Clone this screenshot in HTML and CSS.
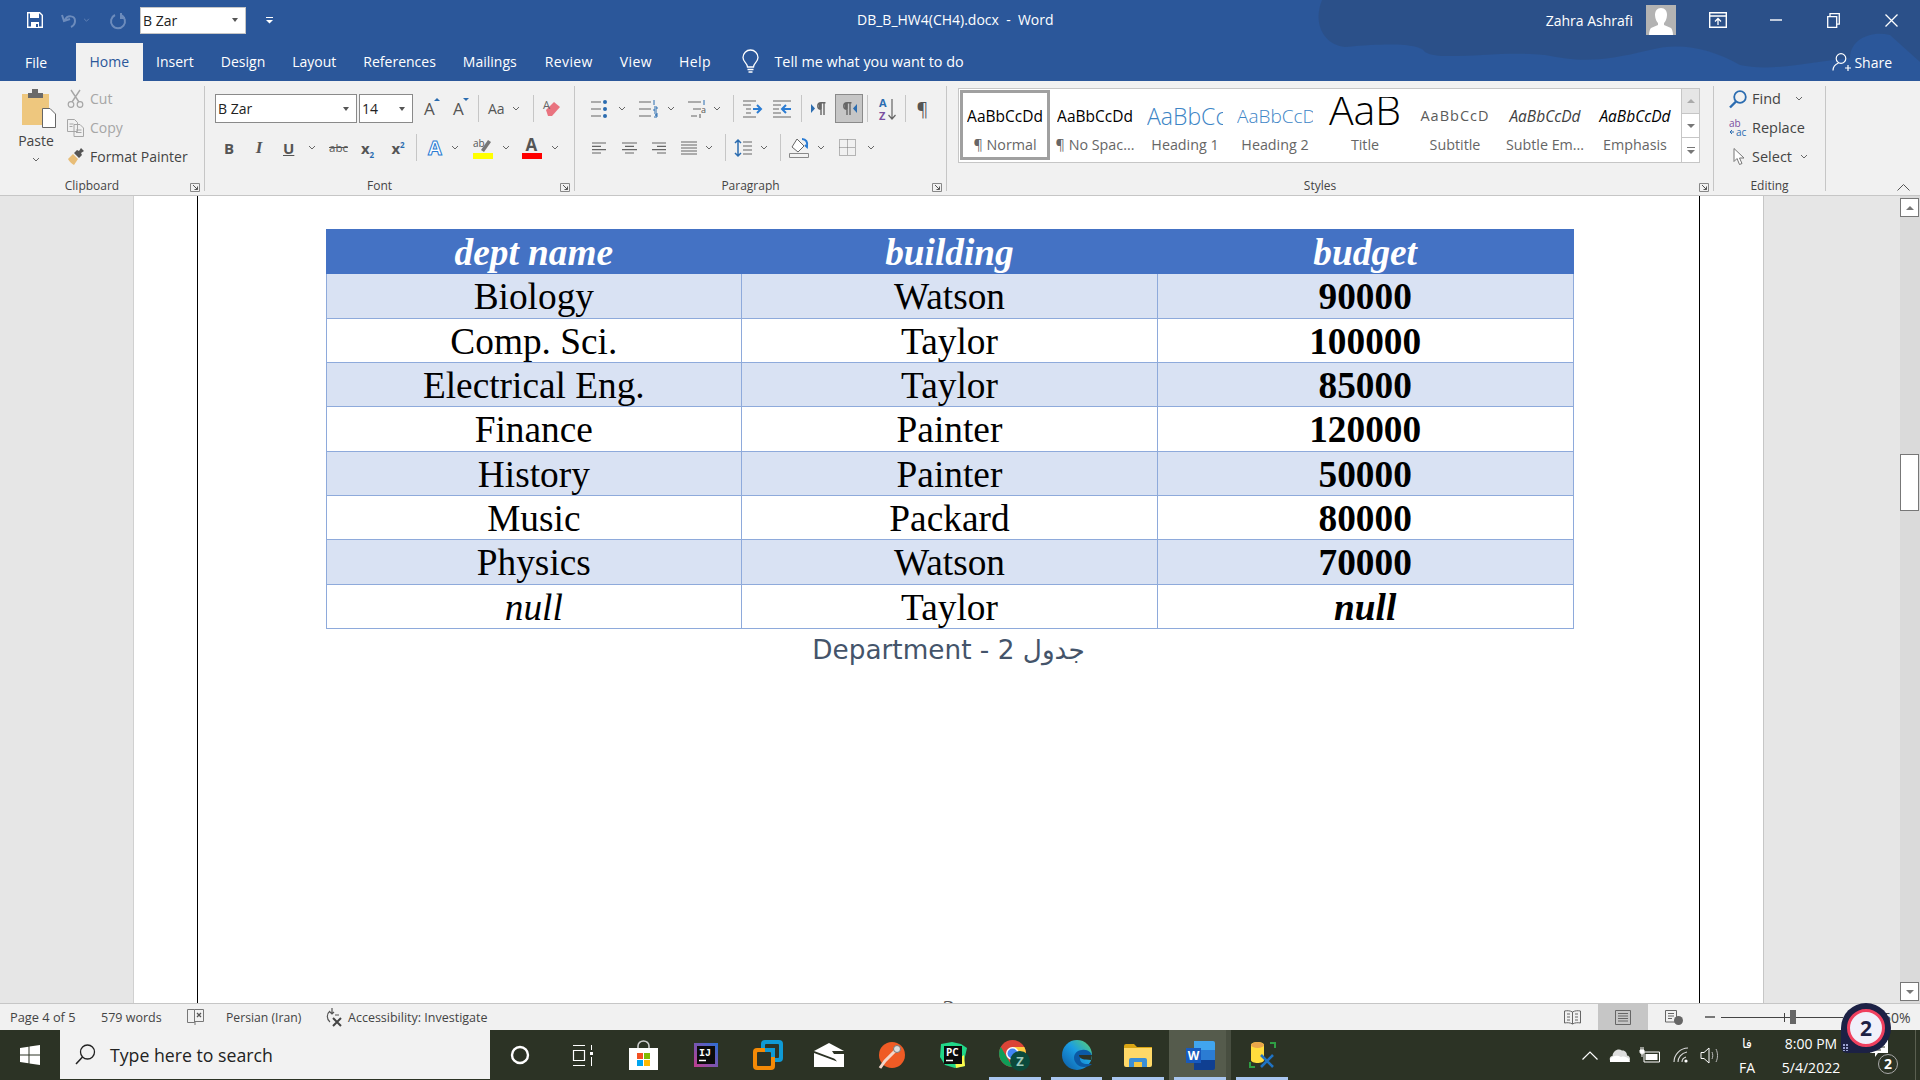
FILE: index.html
```html
<!DOCTYPE html>
<html>
<head>
<meta http-equiv="Content-Type" content="text/html; charset=utf-8"/>
<title>DB_B_HW4(CH4).docx - Word</title>
<link rel="stylesheet" href="styles.css">
</head>
<body>

<svg class="defs" width="0" height="0">
  <symbol id="chev" viewBox="0 0 8 5"><path d="M1 1l3 3 3-3" fill="none" stroke="#666" stroke-width="1"/></symbol>
  <symbol id="launch" viewBox="0 0 10 9"><path d="M.5 8.500V.5h9v8z" fill="none" stroke="#888"/><path d="M3 2l4.500 4.500M7.500 3.500v3h-3" fill="none" stroke="#555"/></symbol>
  <symbol id="lines-l" viewBox="0 0 14 12"><path d="M0 1h14M0 4.300h9M0 7.600h14M0 11h9" stroke="#666" stroke-width="1.200"/></symbol>
  <symbol id="lines-c" viewBox="0 0 15 12"><path d="M0 1h15M3 4.300h9M0 7.600h15M3 11h9" stroke="#666" stroke-width="1.200"/></symbol>
  <symbol id="lines-r" viewBox="0 0 14 12"><path d="M0 1h14M5 4.300h9M0 7.600h14M5 11h9" stroke="#666" stroke-width="1.200"/></symbol>
  <symbol id="lines-j" viewBox="0 0 16 14"><path d="M0 1h16M0 4h16M0 7h16M0 10h16M0 13h16" stroke="#666" stroke-width="1.200"/></symbol>
</svg>

<header class="titlebar">
  <svg class="titlebar-art" width="600" height="81" viewBox="1320 0 600 81"><path d="M1322 0C1312 25 1325 45 1345 47 1400 42 1420 45 1425 52 1440 62 1500 50 1545 55 1580 62 1600 62 1650 50 1680 42 1710 48 1740 65 1770 72 1810 62 1850 58 1850 40 1870 30 1890 35L1920 62V0z" fill="#2c4f85" opacity=".8"/></svg>
  <div class="title-row">
    <svg class="ml-27" width="16" height="16" viewBox="0 0 16 16"><path d="M.7.7h12l2.600 2.600v12H.7z" fill="none" stroke="#fff" stroke-width="1.400"/><path d="M3 1h9v5H3zM4 10h8v6H4z" fill="#fff"/><path d="M9 12h2v3H9z" fill="#2b579a"/></svg>
    <svg class="ml-18" width="19" height="16" viewBox="0 0 19 16"><path d="M4 8c2-5 10-5 10 1 0 3-2 5-4 6M1 3l2 6 6-2" fill="none" stroke="#6d8cbc" stroke-width="2"/></svg>
    <svg class="ml-3" width="7" height="4" viewBox="0 0 8 5"><path d="M1 1l3 3 3-3" fill="none" stroke="#6d8cbc"/></svg>
    <svg class="ml-20" width="16" height="17" viewBox="0 0 16 17"><path d="M5 3a7 7 0 1 0 6 0M11 1v5h4" fill="none" stroke="#6d8cbc" stroke-width="2"/></svg>
    <div class="combo qat-combo ml-14"><span>B Zar</span><i class="drop"></i></div>
    <svg class="ml-20" width="7" height="8" viewBox="0 0 7 8"><path d="M0 1.500h7" stroke="#fff"/><path d="M0 4h7L3.500 7.500z" fill="#fff"/></svg>
    <div class="doc-title">DB_B_HW4(CH4).docx&nbsp; - &nbsp;Word</div>
    <div class="user-controls">
      <span class="user-name">Zahra Ashrafi</span>
      <svg class="avatar" width="30" height="30" viewBox="0 0 30 30"><path fill="#b3b3b3" d="M0 0h30v30H0z"/><path fill="#fff" d="M15 3c4 0 6 3 6 7s-2 7-3 8v2l7 3c1 1 2 4 2 7H3c0-3 1-6 2-7l7-3v-2c-1-1-3-4-3-8s2-7 6-7z"/></svg>
      <svg class="ml-33" width="18" height="16" viewBox="0 0 18 16"><path d="M.7.7h16.600v14.600H.7zM1 4h16" fill="none" stroke="#fff" stroke-width="1.400"/><path d="M9 13V7M6 9.500L9 6.500l3 3" fill="none" stroke="#fff" stroke-width="1.300"/></svg>
      <svg class="ml-43" width="12" height="2" viewBox="0 0 12 2"><path d="M0 1h12" stroke="#fff" stroke-width="1.400"/></svg>
      <svg class="ml-45" width="13" height="15" viewBox="0 0 13 15"><path d="M.7 3.700h9v10.600h-9zM3 3.500V.7h9.300v10.500h-2.500" fill="none" stroke="#fff" stroke-width="1.300"/></svg>
      <svg class="ml-45" width="13" height="13" viewBox="0 0 13 13"><path d="M.5.500l12 12M12.500.5l-12 12" stroke="#fff" stroke-width="1.300"/></svg>
    </div>
  </div>
  <nav class="tab-row">
    <a class="tab-file">File</a>
    <a class="tab active">Home</a>
    <a class="tab">Insert</a>
    <a class="tab">Design</a>
    <a class="tab">Layout</a>
    <a class="tab">References</a>
    <a class="tab tab-mail">Mailings</a>
    <a class="tab tab-wide">Review</a>
    <a class="tab tab-wide">View</a>
    <a class="tab tab-wide">Help</a>
    <svg class="ml-18" width="17" height="24" viewBox="0 0 17 24"><path d="M5.500 17c0-4-4.500-5-4.500-9.500a7.500 7.500 0 0 1 15 0C16 12 11.500 13 11.500 17z" fill="none" stroke="#fff" stroke-width="1.300"/><path d="M5.500 19.500h6M6.500 22h4" stroke="#fff" stroke-width="1.500"/></svg>
    <span class="tell-me">Tell me what you want to do</span>
    <div class="share">
      <svg width="19" height="18" viewBox="0 0 19 18"><circle cx="9" cy="5.500" r="4.800" fill="none" stroke="#fff" stroke-width="1.200"/><path d="M1 17.500c0-4 3-6.500 5.500-7.500M13 15h6M16 12v6" fill="none" stroke="#fff" stroke-width="1.200"/></svg>
      <span>Share</span>
    </div>
  </nav>
</header>

<section class="ribbon">
  <div class="group clipboard">
    <div class="group-body clip-body">
      <div class="paste">
        <svg width="34" height="39" viewBox="0 0 34 39"><path d="M0 5h27v31H0z" fill="#eec77e"/><path d="M6 4h4V0h6v4h5v5H6z" fill="#6a6a6a"/><path d="M20.500 19.500h7.500l5.500 5.500v13.500h-13z" fill="#fff" stroke="#666"/></svg>
        <span>Paste</span>
        <svg class="chev" width="8" height="5"><use href="#chev"/></svg>
      </div>
      <div class="small-col">
        <div class="small-btn off"><svg width="17" height="18" viewBox="0 0 17 18"><circle cx="4" cy="14.500" r="2.800" fill="none" stroke="#a6a6a6" stroke-width="1.200"/><circle cx="13" cy="14.500" r="2.800" fill="none" stroke="#a6a6a6" stroke-width="1.200"/><path d="M5 12L13 0M12 12L4 0" stroke="#a6a6a6" stroke-width="1.400"/></svg><span>Cut</span></div>
        <div class="small-btn off"><svg width="17" height="18" viewBox="0 0 17 18"><path d="M.5.500h7l3 3v9H.5zM7 5.500h6l3.500 3.500v8.500H7z" fill="#f1f1f1" stroke="#a6a6a6"/><path d="M2.500 5h4M2.500 7.500h3M9 11h5.500M9 13.500h5.500" stroke="#a6a6a6"/></svg><span>Copy</span></div>
        <div class="small-btn"><svg width="17" height="18" viewBox="0 0 17 18"><path d="M1 11l5-5 5 5-4 6c-2-1-5-4-6-6z" fill="#e8bd77"/><path d="M7 5l3-3 2 1 2-3 3 3-3 2 1 2-3 3z" fill="#555"/></svg><span>Format Painter</span></div>
      </div>
    </div>
    <div class="group-label">Clipboard<svg class="launcher" width="10" height="9"><use href="#launch"/></svg></div>
  </div>

  <div class="group font">
    <div class="group-body pad-rows">
      <div class="row">
        <div class="combo font-name"><span>B Zar</span><i class="drop"></i></div>
        <div class="combo font-size ml-2"><span>14</span><i class="drop"></i></div>
        <span class="glyph grow ml-11">A<i class="tick up"></i></span>
        <span class="glyph grow ml-15">A<i class="tick down"></i></span>
        <i class="sep ml-11"></i>
        <span class="glyph case ml-9">Aa</span>
        <svg class="chev ml-6" width="8" height="5"><use href="#chev"/></svg>
        <i class="sep ml-13"></i>
        <svg class="ml-9" width="18" height="19" viewBox="0 0 18 19"><path d="M3 11L11 3l6 5-8 9H5z" fill="#e9737f"/><text x="0" y="10" font-size="11" font-family="Open Sans" fill="#666">A</text></svg>
      </div>
      <div class="row second">
        <b class="fmt w-9 ml-9">B</b>
        <i class="fmt w-8 ital ml-22">I</i>
        <b class="fmt w-11 under ml-20">U</b>
        <svg class="chev ml-14" width="8" height="5"><use href="#chev"/></svg>
        <span class="fmt w-19 strike ml-13">abc</span>
        <span class="fmt w-15 bold ml-12">x<sub>2</sub></span>
        <span class="fmt w-14 bold ml-16">x<sup>2</sup></span>
        <i class="sep ml-11"></i>
        <span class="fmt w-16 effect ml-10">A</span>
        <svg class="chev ml-8" width="8" height="5"><use href="#chev"/></svg>
        <svg class="ml-14" width="20" height="22" viewBox="0 0 20 22"><text x="0" y="10" font-size="10" font-family="Open Sans" fill="#555">ab</text><path d="M8 13l7-10 3 2-7 10z" fill="#777"/><path d="M0 16h20v6H0z" fill="#ffff00"/></svg>
        <svg class="chev ml-9" width="8" height="5"><use href="#chev"/></svg>
        <svg class="ml-12" width="20" height="22" viewBox="0 0 20 22"><text x="3.500" y="14" font-size="17" font-weight="700" font-family="Open Sans" fill="#555">A</text><path d="M0 16h20v6H0z" fill="#ff0000"/></svg>
        <svg class="chev ml-9" width="8" height="5"><use href="#chev"/></svg>
      </div>
    </div>
    <div class="group-label">Font<svg class="launcher" width="10" height="9"><use href="#launch"/></svg></div>
  </div>

  <div class="group para">
    <div class="group-body pad-rows">
      <div class="row">
        <svg class="ml-16" width="16" height="18" viewBox="0 0 16 18"><path d="M0 2h10M0 9h10M0 16h10" stroke="#666" stroke-width="1.200"/><circle cx="14" cy="2" r="2" fill="#2b6cb0"/><circle cx="14" cy="9" r="2" fill="#2b6cb0"/><circle cx="14" cy="16" r="2" fill="#2b6cb0"/></svg>
        <svg class="chev ml-11" width="8" height="5"><use href="#chev"/></svg>
        <svg class="ml-13" width="19" height="18" viewBox="0 0 19 18"><path d="M0 2h12M0 9h12M0 16h12" stroke="#666" stroke-width="1.200"/><path d="M15 0v5M15 7h3v2h-3v2h3M15 13h3v2h-2 2v2h-3" fill="none" stroke="#2b6cb0"/></svg>
        <svg class="chev ml-9" width="8" height="5"><use href="#chev"/></svg>
        <svg class="ml-13" width="19" height="18" viewBox="0 0 19 18"><path d="M0 2h13M5 9h8M3 16h6" stroke="#666" stroke-width="1.200"/><path d="M16 0v5" stroke="#2b6cb0"/><text x="13" y="13" font-size="9" font-family="Open Sans" fill="#555">a</text><path d="M12 14v4" stroke="#555"/></svg>
        <svg class="chev ml-6" width="8" height="5"><use href="#chev"/></svg>
        <i class="sep ml-12"></i>
        <svg class="ml-9" width="19" height="18" viewBox="0 0 19 18"><path d="M0 1h13M0 5h8M3 9h5M3 13h5M0 17h13" stroke="#666" stroke-width="1.100"/><path d="M10 9h8M14 5l4 4-4 4" fill="none" stroke="#2b7cd3" stroke-width="2"/></svg>
        <svg class="ml-11" width="18" height="18" viewBox="0 0 18 18"><path d="M0 1h18M0 5h8M0 9h6M0 13h8M0 17h18" stroke="#666" stroke-width="1.100"/><path d="M18 9h-9M13 5L9 9l4 4" fill="none" stroke="#2b7cd3" stroke-width="2"/></svg>
        <i class="sep ml-10"></i>
        <svg class="ml-9" width="15" height="13" viewBox="0 0 15 13"><path d="M0 2l4 4.500L0 11z" fill="#2b6cb0"/><path d="M10 1v12M13 1v12M14.500 .8H10a3 3 0 0 0 0 6.500" fill="none" stroke="#666" stroke-width="1.400"/><path d="M7.500 1h3v6h-3z" fill="#666"/></svg>
        <div class="toggled ml-9"><svg width="15" height="13" viewBox="0 0 15 13"><path d="M15 2l-4 4.500 4 4.500z" fill="#2b6cb0"/><path d="M5 1v12M8 1v12M9.500 .8H5a3 3 0 0 0 0 6.500" fill="none" stroke="#666" stroke-width="1.400"/><path d="M2.500 1h3v6h-3z" fill="#666"/></svg></div>
        <i class="sep ml-4"></i>
        <svg class="ml-11" width="17" height="24" viewBox="0 0 17 24"><text x="0" y="10" font-size="11" font-weight="700" font-family="Open Sans" fill="#2b6cb0">A</text><text x="0" y="23" font-size="11" font-weight="700" font-family="Open Sans" fill="#7a4ea0">Z</text><path d="M13 2v20M9.500 18l3.500 4 3.500-4" fill="none" stroke="#666" stroke-width="1.200"/></svg>
        <i class="sep ml-9"></i>
        <span class="fmt w-13 pilcrow ml-10">¶</span>
      </div>
      <div class="row second">
        <svg class="ml-17" width="14" height="12"><use href="#lines-l"/></svg>
        <svg class="ml-16" width="15" height="12"><use href="#lines-c"/></svg>
        <svg class="ml-15" width="14" height="12"><use href="#lines-r"/></svg>
        <svg class="ml-15" width="16" height="14"><use href="#lines-j"/></svg>
        <svg class="chev ml-8" width="8" height="5"><use href="#chev"/></svg>
        <i class="sep ml-12"></i>
        <svg class="ml-9" width="17" height="18" viewBox="0 0 17 18"><path d="M3 1v16M0 4l3-3 3 3M0 14l3 3 3-3" fill="none" stroke="#2b6cb0" stroke-width="1.500"/><path d="M8 3h9M8 7h9M8 11h9M8 15h9" stroke="#666" stroke-width="1.200"/></svg>
        <svg class="chev ml-8" width="8" height="5"><use href="#chev"/></svg>
        <i class="sep ml-12"></i>
        <svg class="ml-8" width="20" height="20" viewBox="0 0 20 20"><path d="M8 1l7 7-6 6-6-5z" fill="#fff" stroke="#666"/><path d="M13 1c4 0 6 3 5 8l-2-2" fill="none" stroke="#2b7cd3" stroke-width="2"/><path d="M.5 15.500h19v4H.5z" fill="#f1f1f1" stroke="#888"/></svg>
        <svg class="chev ml-8" width="8" height="5"><use href="#chev"/></svg>
        <svg class="ml-14" width="17" height="17" viewBox="0 0 17 17"><path d="M.5.500h16v16H.5zM8.500.5v16M.5 8.500h16" fill="none" stroke="#777" stroke-dasharray="1 1"/></svg>
        <svg class="chev ml-11" width="8" height="5"><use href="#chev"/></svg>
      </div>
    </div>
    <div class="group-label">Paragraph<svg class="launcher" width="10" height="9"><use href="#launch"/></svg></div>
  </div>

  <div class="group styles">
    <div class="group-body">
      <div class="gallery">
        <div class="gallery-items">
          <div class="style-item selected"><div class="sample s-normal">AaBbCcDd</div><div class="style-name">¶ Normal</div></div>
          <div class="style-item"><div class="sample s-normal">AaBbCcDd</div><div class="style-name">¶ No Spac...</div></div>
          <div class="style-item"><div class="sample s-h1">AaBbCc</div><div class="style-name">Heading 1</div></div>
          <div class="style-item"><div class="sample s-h2">AaBbCcD</div><div class="style-name">Heading 2</div></div>
          <div class="style-item"><div class="sample s-title">AaB</div><div class="style-name">Title</div></div>
          <div class="style-item"><div class="sample s-sub">AaBbCcD</div><div class="style-name">Subtitle</div></div>
          <div class="style-item"><div class="sample s-subem">AaBbCcDd</div><div class="style-name">Subtle Em...</div></div>
          <div class="style-item"><div class="sample s-em">AaBbCcDd</div><div class="style-name">Emphasis</div></div>
        </div>
        <div class="gallery-scroll">
          <div class="g-btn first"><i class="tri up-tri"></i></div>
          <div class="g-btn"><i class="tri"></i></div>
          <div class="g-btn"><i class="bar"></i><i class="tri"></i></div>
        </div>
      </div>
    </div>
    <div class="group-label">Styles<svg class="launcher" width="10" height="9"><use href="#launch"/></svg></div>
  </div>

  <div class="group editing">
    <div class="group-body">
      <div class="small-col edit-col">
        <div class="small-btn"><svg width="18" height="18" viewBox="0 0 18 18"><circle cx="11" cy="7" r="5.800" fill="none" stroke="#2b6cb0" stroke-width="1.800"/><path d="M7 11.500L1 17.500" stroke="#2b6cb0" stroke-width="2.400"/></svg><span>Find</span><svg class="chev ml-9" width="8" height="5"><use href="#chev"/></svg></div>
        <div class="small-btn"><svg width="18" height="18" viewBox="0 0 18 18"><text x="0" y="8" font-size="10" font-family="Open Sans" fill="#7a4ea0">ab</text><text x="7" y="17" font-size="10" font-family="Open Sans" fill="#2b6cb0">ac</text><path d="M1 13h4M3 11l-2 2 2 2" fill="none" stroke="#2b6cb0"/></svg><span>Replace</span></div>
        <div class="small-btn"><svg width="18" height="18" viewBox="0 0 18 18"><path d="M5 .5v13l3-3 2.500 6 2.500-1-2.500-5.500h4.500z" fill="#fff" stroke="#777"/></svg><span>Select</span><svg class="chev ml-3" width="8" height="5"><use href="#chev"/></svg></div>
      </div>
    </div>
    <div class="group-label edit-label">Editing</div>
  </div>
  <svg class="collapse" width="13" height="7" viewBox="0 0 13 7"><path d="M.5 6.500l6-6 6 6" fill="none" stroke="#555"/></svg>
</section>

<main class="doc">
  <div class="gutter-left"></div>
  <div class="page">
    <div class="page-body">
      <table class="dept">
        <tr class="head"><th>dept name</th><th>building</th><th>budget</th></tr>
        <tr class="band"><td>Biology</td><td>Watson</td><td class="num">90000</td></tr>
        <tr><td>Comp. Sci.</td><td>Taylor</td><td class="num">100000</td></tr>
        <tr class="band"><td>Electrical Eng.</td><td>Taylor</td><td class="num">85000</td></tr>
        <tr><td>Finance</td><td>Painter</td><td class="num">120000</td></tr>
        <tr class="band"><td>History</td><td>Painter</td><td class="num">50000</td></tr>
        <tr><td>Music</td><td>Packard</td><td class="num">80000</td></tr>
        <tr class="band"><td>Physics</td><td>Watson</td><td class="num">70000</td></tr>
        <tr><td class="null">null</td><td>Taylor</td><td class="num null">null</td></tr>
      </table>
      <p class="caption" dir="rtl">جدول 2 - Department</p>
      <div class="page-num">3</div>
    </div>
  </div>
  <div class="gutter-right"></div>
  <div class="vscroll">
    <div class="v-btn"><i class="tri up-tri"></i></div>
    <div class="v-thumb"></div>
    <div class="v-btn"><i class="tri"></i></div>
  </div>
</main>

<footer class="status">
  <span class="st-page">Page 4 of 5</span>
  <span class="st-words">579 words</span>
  <svg class="st-book" width="17" height="16" viewBox="0 0 17 16"><path d="M7.500.5H.5v13h7zM7.500.5h9v12h-9" fill="none" stroke="#777"/><path d="M10 4l4 4M14 4l-4 4" stroke="#555" stroke-width="1.300"/><path d="M8 16v-3" stroke="#777"/></svg>
  <span class="st-lang">Persian (Iran)</span>
  <svg class="st-a11y" width="20" height="19" viewBox="0 0 20 19"><path d="M6 3a7 7 0 0 0 0 11M8 0v6M6 4l2 2 2-2M11 7h4" fill="none" stroke="#555" stroke-width="1.200"/><path d="M9 10l8 8M17 10l-8 8" stroke="#444" stroke-width="2"/></svg>
  <span class="st-acc">Accessibility: Investigate</span>
  <div class="st-right">
    <svg width="17" height="15" viewBox="0 0 17 15"><path d="M8.500 2C6 .5 3 .5.500 1v12c2.500-.5 5.500-.5 8 1 2.500-1.500 5.500-1.500 8-1V1c-2.500-.5-5.500-.5-8 1zM8.500 2v12M3 4h3M3 7h3M3 10h3M11 4h3M11 7h3M11 10h3" fill="none" stroke="#666"/></svg>
    <div class="view-active"><svg width="16" height="15" viewBox="0 0 16 15"><path d="M.5.500h15v14H.5zM3 3.500h10M3 6h10M3 8.500h10M3 11h10" fill="none" stroke="#666"/></svg></div>
    <svg width="18" height="15" viewBox="0 0 18 15"><path d="M11 12H.5V.5h11v7M3 3.500h6M3 6h6M3 8.500h4" fill="none" stroke="#666"/><circle cx="13.500" cy="10.500" r="4.500" fill="#666"/></svg>
    <svg class="ml-22" width="10" height="2" viewBox="0 0 10 2"><path d="M0 1h10" stroke="#444" stroke-width="1.400"/></svg>
    <div class="zoom-track"><i class="zoom-tick"></i><i class="zoom-thumb"></i></div>
    <span class="zoom-pct">50%</span>
  </div>
</footer>

<div class="taskbar">
  <div class="start"><svg width="20" height="20" viewBox="0 0 20 20"><path d="M0 3l8.500-1.300V9.500H0zM9.500 1.500L20 0v9.500H9.500zM0 10.500h8.500v7.800L0 17zM9.500 10.500H20V20L9.500 18.500z" fill="#fff"/></svg></div>
  <div class="search">
    <svg width="21" height="21" viewBox="0 0 21 21"><circle cx="12.500" cy="8" r="7" fill="none" stroke="#222" stroke-width="1.300"/><path d="M7.500 13L1 20" stroke="#222" stroke-width="1.500"/></svg>
    <span>Type here to search</span>
  </div>
  <div class="app"><svg width="20" height="20" viewBox="0 0 20 20"><circle cx="10" cy="10" r="8" fill="none" stroke="#fff" stroke-width="2.400"/></svg></div>
  <div class="app"><svg width="21" height="21" viewBox="0 0 21 21"><path d="M1 .5h12M1 20.500h12M1.500 5.500h11v10h-11z" fill="none" stroke="#fff" stroke-width="1.200"/><path d="M18 7h3v3h-3z" fill="#fff"/><path d="M19.500 0v5M19.500 12v9" stroke="#fff"/></svg></div>
  <div class="app"><svg width="29" height="29" viewBox="0 0 29 29"><path d="M9 8V5a5.500 5 0 0 1 11 0v3" fill="none" stroke="#ccc" stroke-width="1.600"/><path d="M0 7h29v22H0z" fill="#fff"/><path d="M8 12h6v6H8z" fill="#f25022"/><path d="M15 12h6v6h-6z" fill="#7fba00"/><path d="M8 19h6v6H8z" fill="#00a4ef"/><path d="M15 19h6v6h-6z" fill="#ffb900"/></svg></div>
  <div class="app"><svg width="24" height="24" viewBox="0 0 24 24"><defs><linearGradient id="ij" x1="0" y1="1" x2="1" y2="0"><stop offset="0" stop-color="#c43c8c"/><stop offset="1" stop-color="#2a6fd6"/></linearGradient></defs><path d="M0 0h24v24H0z" fill="url(#ij)"/><path d="M3 3h18v18H3z" fill="#0b0b0b"/><text x="5" y="13" font-size="10" font-weight="700" font-family="Liberation Mono" fill="#fff">IJ</text><path d="M5 17.500h7" stroke="#fff" stroke-width="1.500"/></svg></div>
  <div class="app"><svg width="30" height="30" viewBox="0 0 30 30"><rect x="8" y="0" width="22" height="22" rx="4" fill="#0f9ad6"/><rect x="12" y="4" width="14" height="14" rx="1" fill="#2c3325"/><rect x="0" y="8" width="22" height="22" rx="4" fill="#f48a06"/><rect x="4" y="12" width="14" height="14" rx="1" fill="#2c3325"/><path d="M12 8h10v9h-4v-5h-6z" fill="#0f9ad6"/></svg></div>
  <div class="app"><svg width="30" height="24" viewBox="0 0 30 24"><path d="M15 0l15 8H18l6 9L0 8z" fill="#fff"/><path d="M0 10l23 8.500L17 11h13v13H0z" fill="#fff"/></svg></div>
  <div class="app"><svg width="27" height="27" viewBox="0 0 27 27"><circle cx="14" cy="13" r="13" fill="#ef5b25"/><path d="M2 26l5-7 11-11" stroke="#f4d6c9" stroke-width="3" fill="none"/><circle cx="19" cy="7" r="3.500" fill="#ddd" stroke="#777"/></svg></div>
  <div class="app"><svg width="28" height="28" viewBox="0 0 28 28"><path d="M2 3l11-2 9 2 6 4-3 13 1 5-10 2-10-3-5-8z" fill="#21d789"/><path d="M16 20l9-6 1 11-9 2z" fill="#fcf84a"/><path d="M5 5h18v18H5z" fill="#0b0b0b"/><text x="7" y="15" font-size="10" font-weight="700" font-family="Open Sans" fill="#fff">PC</text><path d="M7 19.500h7" stroke="#fff" stroke-width="1.500"/></svg></div>
  <div class="app run"><svg width="31" height="31" viewBox="0 0 31 31"><circle cx="13.500" cy="13.500" r="13.500" fill="#db4437"/><path d="M13.500 27A13.500 13.500 0 0 1 1.800 6.800l6 10.500 5.700 9.700z" fill="#0f9d58"/><path d="M13.500 7h11.800a13.500 13.500 0 0 1-11.800 20l5.900-10z" fill="#ffcd40"/><circle cx="13.500" cy="13.500" r="6.500" fill="#fff"/><circle cx="13.500" cy="13.500" r="5" fill="#4285f4"/><circle cx="21" cy="21" r="10" fill="#0b4a3c"/><text x="21" y="26" text-anchor="middle" font-size="13" font-weight="700" font-family="Open Sans" fill="#9fc9bc">Z</text></svg></div>
  <div class="app run"><svg width="30" height="30" viewBox="0 0 30 30"><defs><linearGradient id="edg" x1="0" y1="1" x2="1" y2="0"><stop offset="0" stop-color="#0c59a4"/><stop offset=".55" stop-color="#1b9de2"/><stop offset="1" stop-color="#5fd36b"/></linearGradient></defs><circle cx="15" cy="15" r="15" fill="url(#edg)"/><path d="M30 17c0-5-5-8-10-7-5 0-8 4-8 8s4 9 10 9c3 0 6-1 8-3l-5 0c-4 0-7-2-7-5 0-2 2-3 4-3h8z" fill="#0c59a4"/><path d="M17 15h13l-1 5-5-.5c-4 0-7-2-7-4.500z" fill="#2c3325"/></svg></div>
  <div class="app run"><svg width="28" height="23" viewBox="0 0 28 23"><path d="M0 2a2 2 0 0 1 2-2h8l3 3h15v4H0z" fill="#d9a514"/><path d="M0 4h28v17a2 2 0 0 1-2 2H2a2 2 0 0 1-2-2z" fill="#ffd968"/><path d="M5 23v-7a2 2 0 0 1 2-2h14a2 2 0 0 1 2 2v7h-5v-5h-8v5z" fill="#3a8ed6"/><path d="M10 18h8v5h-8z" fill="#f4c542"/></svg></div>
  <div class="app run active-app"><svg width="29" height="29" viewBox="0 0 29 29"><path d="M8 0h19a2 2 0 0 1 2 2v7H8z" fill="#41a5ee"/><path d="M8 9h21v10H8z" fill="#2b7cd3"/><path d="M8 19h21v8a2 2 0 0 1-2 2H8z" fill="#103f91"/><path d="M0 7h15v15H0z" fill="#185abd"/><text x="7.500" y="19" text-anchor="middle" font-size="12" font-weight="700" font-family="Open Sans" fill="#fff">W</text></svg></div>
  <div class="app run"><svg width="28" height="28" viewBox="0 0 28 28"><path d="M22 2h5v5M2 21v5h5" fill="none" stroke="#2f9e44" stroke-width="2"/><path d="M3 4c0-4 13-4 13 0v15c0 4-13 4-13 0z" fill="#ffdd3d"/><ellipse cx="9.500" cy="4" rx="6.500" ry="3" fill="#e8a54b"/><path d="M13 14l12 12M25 14L13 26" stroke="#1f73c4" stroke-width="2.600"/></svg></div>
  <div class="tray">
    <svg width="16" height="9" viewBox="0 0 16 9"><path d="M.5 8.500L8 1l7.500 7.500" fill="none" stroke="#fff" stroke-width="1.200"/></svg>
    <svg class="ml-12" width="20" height="14" viewBox="0 0 20 14"><path d="M3 14a3 3 0 0 1-.5-6C3 3 8 0 12 2.500c3-.5 5 2 5 5 2 0 3 2 3 3.500s-1 3-3 3z" fill="#ddd"/><path d="M0 11c3-4 8-4 11-2 3-1 6 0 8 2l1 3H0z" fill="#fff"/></svg>
    <svg class="ml-10" width="20" height="16" viewBox="0 0 20 16"><path d="M4 5h15.500v10H4z" fill="none" stroke="#fff"/><path d="M5.500 7h12v6h-12z" fill="#fff"/><path d="M0 3h4v2c0 1-1 2-2 2S0 6 0 5zM1 0v3M3 0v3M2 7v3" stroke="#fff" fill="#fff"/></svg>
    <svg class="ml-13" width="16" height="16" viewBox="0 0 16 16"><path d="M1 15C1 8 7 1 15 1M5 15c0-4 3-9 9-10M9 15c0-2 1-4 4-5" fill="none" stroke="#ddd" stroke-width="1.100"/><circle cx="13" cy="14" r="1.600" fill="#fff"/></svg>
    <svg class="ml-11" width="19" height="17" viewBox="0 0 19 17"><path d="M1 5.500h3l5-4.500v15l-5-4.500H1z" fill="none" stroke="#fff"/><path d="M12 5c1 2 1 5 0 7M16 2c2 4 2 9 0 13" fill="none" stroke="#bbb"/></svg>
    <div class="lang ml-13"><span class="lang-fa">فا</span><span>FA</span></div>
    <div class="clock ml-14"><span>8:00 PM</span><span>5/4/2022</span></div>
    <div class="notif ml-24">
      <svg width="18" height="18" viewBox="0 0 18 18"><path d="M0 0h18v13H8l-3 4v-4H0z" fill="#fff"/><path d="M3 4h12M3 7h12M3 10h8" stroke="#2c3325"/></svg>
      <span class="notif-count">2</span>
    </div>
    <i class="show-desktop"></i>
  </div>
</div>

<div class="float-badge">
  <div class="float-ring">2</div>
  <svg class="float-grip" width="7" height="7" viewBox="0 0 7 7"><path d="M0 0h2v2H0zM3 0h2v2H3zM0 3h2v2H0zM3 3h2v2H3zM0 6h2v1H0zM3 6h2v1H3z" fill="#9aa2d0"/></svg>
</div>

</body>
</html>
```

FILE: styles.css
```css
* {
  box-sizing: border-box;
}

html, body {
  margin: 0;
  height: 100%;
  overflow: hidden;
}

body {
  width: 1920px;
  height: 1080px;
  position: relative;
  font-family: "Open Sans", sans-serif;
  font-size: 14px;
  color: #444;
  background: #f1f1f1;
  display: flex;
  flex-direction: column;
}

.defs {
  position: absolute;
}

svg {
  display: block;
  flex: none;
  overflow: visible;
}

/* spacing helpers, the ribbon is a long row of little icons */
.ml-2 { margin-left: 2px; }
.ml-3 { margin-left: 3px; }
.ml-4 { margin-left: 4px; }
.ml-6 { margin-left: 6px; }
.ml-8 { margin-left: 8px; }
.ml-9 { margin-left: 9px; }
.ml-10 { margin-left: 10px; }
.ml-11 { margin-left: 11px; }
.ml-12 { margin-left: 12px; }
.ml-13 { margin-left: 13px; }
.ml-14 { margin-left: 14px; }
.ml-15 { margin-left: 15px; }
.ml-16 { margin-left: 16px; }
.ml-17 { margin-left: 17px; }
.ml-18 { margin-left: 18px; }
.ml-20 { margin-left: 20px; }
.ml-22 { margin-left: 22px; }
.ml-24 { margin-left: 24px; }
.ml-27 { margin-left: 27px; }
.ml-33 { margin-left: 33px; }
.ml-43 { margin-left: 43px; }
.ml-45 { margin-left: 45px; }

/* title bar */
.titlebar {
  height: 81px;
  flex: none;
  position: relative;
  background: #2b579a;
  color: #fff;
}

.titlebar-art {
  position: absolute;
  right: 0;
  top: 0;
}

.title-row {
  position: relative;
  height: 40px;
  display: flex;
  align-items: center;
}

.combo {
  display: flex;
  align-items: center;
  justify-content: space-between;
  background: #fff;
  border: 1px solid #8a8a8a;
  color: #222;
  padding: 0 7px 0 2px;
  font-size: 14px;
}

.drop {
  width: 0;
  height: 0;
  border: 3.500px solid transparent;
  border-top: 4px solid #555;
  border-bottom: 0;
}

.qat-combo {
  width: 106px;
  height: 27px;
  border-color: #c6c6c6;
}

.doc-title {
  position: absolute;
  left: 857px;
  top: 0;
  line-height: 40px;
  white-space: nowrap;
  font-size: 14px;
}

.user-controls {
  margin-left: auto;
  padding-right: 22px;
  display: flex;
  align-items: center;
}

.user-name {
  margin-right: 13px;
  font-size: 14px;
}

.tab-row {
  position: relative;
  margin-top: 3px;
  height: 38px;
  display: flex;
  align-items: center;
  font-size: 14px;
}

.tab-file {
  width: 76px;
  padding-left: 25px;
}

.tab {
  height: 38px;
  line-height: 38px;
  padding: 0 13.500px;
}

.tab-mail {
  padding-right: 14.500px;
}

.tab-wide {
  letter-spacing: .4px;
}

.tab.active {
  background: #f1f1f1;
  color: #2b579a;
}

.tell-me {
  margin-left: 15px;
  font-size: 14.400px;
  line-height: 36px;
}

.share {
  margin-left: auto;
  padding-right: 28px;
  display: flex;
  align-items: center;
  gap: 3px;
}

/* ribbon */
.ribbon {
  height: 115px;
  flex: none;
  display: flex;
  background: #f1f1f1;
  border-bottom: 1px solid #c6c6c6;
  font-size: 14px;
}

.group {
  margin: 5px 0 4px;
  border-right: 1px solid #c6c6c6;
  display: flex;
  flex-direction: column;
  flex: none;
}

.group-body {
  flex: 1;
}

.group-label {
  position: relative;
  height: 16px;
  margin-bottom: -3px;
  padding-right: 20px;
  text-align: center;
  font-size: 12px;
  line-height: 16px;
  color: #444;
}

.edit-label {
  padding-right: 0;
}

.launcher {
  position: absolute;
  right: 4px;
  top: 5px;
}

.clipboard { width: 205px; }
.font { width: 370px; }
.para { width: 372px; }
.styles { width: 767px; }
.editing { width: 112px; }

.clip-body {
  display: flex;
}

.paste {
  width: 67px;
  padding: 3px 0 0 22px;
  font-size: 14px;
}

.paste span {
  display: block;
  width: 36px;
  margin: 3px 0 0 -4px;
  text-align: center;
  line-height: 20px;
}

.paste .chev {
  margin: 6px 0 0 10px;
}

.small-col {
  margin-top: -2px;
}

.small-btn {
  height: 29px;
  display: flex;
  align-items: center;
  gap: 6px;
  white-space: nowrap;
}

.small-btn.off {
  color: #a6a6a6;
}

.edit-col {
  padding-left: 15px;
}

.edit-col .small-btn {
  gap: 5px;
  font-size: 14.500px;
}

.pad-rows {
  padding: 8px 0 0 0;
}

.font .pad-rows {
  padding-left: 10px;
}

.row {
  height: 29px;
  display: flex;
  align-items: center;
}

.row.second {
  margin-top: 10px;
}

.sep {
  width: 1px;
  height: 27px;
  background: #c6c6c6;
  flex: none;
}

.font-name { width: 142px; height: 29px; }
.font-size { width: 54px; height: 29px; }

.glyph {
  position: relative;
  color: #555;
  flex: none;
}

.grow {
  width: 14px;
  font-size: 17px;
  line-height: 20px;
}

.tick {
  position: absolute;
  right: -2px;
  top: -1px;
  border: 3px solid transparent;
}

.tick.up {
  border-top: 0;
  border-bottom: 3px solid #2b6cb0;
}

.tick.down {
  border-bottom: 0;
  border-top: 3px solid #2b6cb0;
}

.case {
  width: 18px;
  font-size: 14px;
}

.fmt {
  display: block;
  flex: none;
  text-align: center;
  color: #555;
  font-size: 15px;
  font-style: normal;
  line-height: 20px;
}

.w-8 { width: 8px; }
.w-9 { width: 9px; }
.w-11 { width: 11px; }
.w-13 { width: 13px; }
.w-14 { width: 14px; }
.w-15 { width: 15px; }
.w-16 { width: 16px; }
.w-19 { width: 19px; }

.ital {
  font-family: "Liberation Serif", serif;
  font-style: italic;
  font-weight: 700;
  font-size: 17px;
}

.under {
  text-decoration: underline;
}

.strike {
  font-size: 11.500px;
  text-decoration: line-through;
}

.bold {
  font-weight: 700;
  white-space: nowrap;
}

.bold sub, .bold sup {
  font-size: 8px;
  color: #2b6cb0;
  line-height: 0;
}

.effect {
  font-size: 20px;
  font-weight: 700;
  color: #fff;
  -webkit-text-stroke: 1px #2b7cd3;
}

.pilcrow {
  font-size: 18px;
}

.toggled {
  width: 28px;
  height: 29px;
  flex: none;
  display: flex;
  align-items: center;
  justify-content: center;
  background: #c6c6c6;
  border: 1px solid #8a8a8a;
}

/* styles gallery */
.gallery {
  margin: 2px 0 0 11px;
  width: 742px;
  height: 75px;
  display: flex;
  background: #fff;
  border: 1px solid #c6c6c6;
  border-right: 0;
}

.gallery-items {
  width: 722px;
  display: flex;
  padding: 1px 0 0 1px;
}

.style-item {
  width: 90px;
  height: 70px;
  padding-top: 7px;
  text-align: center;
}

.style-item.selected {
  box-shadow: inset 0 0 0 3px #a0a0a0;
}

.sample {
  width: 76px;
  height: 38px;
  margin: 0 auto;
  overflow: hidden;
  white-space: nowrap;
  line-height: 38px;
  color: #000;
  font-size: 14px;
}

.style-name {
  height: 20px;
  line-height: 20px;
  font-size: 14.300px;
  color: #666;
  white-space: nowrap;
}

.s-normal { font-size: 15.500px; }
.s-h1 { font-size: 23px; color: #3d85c6; font-weight: 300; }
.s-h2 { font-size: 19px; color: #3d85c6; font-weight: 300; }
.s-title { font-size: 41px; font-weight: 300; line-height: 25px; }
.s-sub { font-size: 14.500px; color: #5a5a5a; letter-spacing: 1px; }
.s-subem { font-size: 15.500px; font-style: italic; color: #404040; }
.s-em { font-size: 15.500px; font-style: italic; }

.gallery-scroll {
  width: 19px;
  display: flex;
  flex-direction: column;
  border-left: 1px solid #c6c6c6;
  border-right: 1px solid #c6c6c6;
}

.g-btn {
  flex: 1;
  display: flex;
  flex-direction: column;
  align-items: center;
  justify-content: center;
  gap: 2px;
  border-bottom: 1px solid #c6c6c6;
}

.g-btn.first {
  background: #e6e6e6;
}

.g-btn:last-child {
  border-bottom: 0;
}

.tri {
  display: block;
  width: 0;
  height: 0;
  border: 4px solid transparent;
  border-top: 4px solid #777;
  border-bottom: 0;
}

.tri.up-tri {
  border-top: 0;
  border-bottom: 4px solid #aaa;
}

.bar {
  width: 8px;
  height: 1px;
  background: #777;
}

.collapse {
  margin: 103px 0 0 71px;
}

/* document */
.doc {
  height: 807px;
  flex: none;
  display: flex;
  background: #e6e6e6;
  overflow: hidden;
}

.gutter-left {
  width: 134px;
  flex: none;
  border-right: 1px solid #d0d0d0;
}

.page {
  width: 1630px;
  flex: none;
  padding: 0 63px;
  background: #fff;
  border-right: 1px solid #c6c6c6;
}

.page-body {
  height: 100%;
  border-left: 1px solid #000;
  border-right: 1px solid #000;
  display: flex;
  flex-direction: column;
  align-items: center;
  padding-top: 33px;
}

.dept {
  width: 1248px;
  height: 399px;
  margin-left: 2px;
  border-collapse: collapse;
  table-layout: fixed;
  font-family: "Liberation Serif", serif;
  font-size: 37.330px;
  color: #000;
}

.dept th {
  background: #4472c4;
  color: #fff;
  font-style: italic;
  font-weight: 700;
  border: 1px solid #4472c4;
}

.dept th, .dept td {
  padding: 2px 0 0;
  line-height: 41px;
  height: 44.330px;
  text-align: center;
}

.dept td {
  border: 1px solid #8eaadb;
}

.dept .band td {
  background: #d9e2f3;
}

.dept .num {
  font-weight: 700;
}

.dept .null {
  font-style: italic;
}

.caption {
  margin: 3px 0 0;
  font-family: "DejaVu Sans", sans-serif;
  font-size: 26.300px;
  line-height: 36px;
  color: #44546a;
}

.page-num {
  margin-top: auto;
  margin-bottom: -16px;
  font-family: "Liberation Serif", serif;
  font-size: 24px;
  line-height: 22px;
  color: #555;
}

.gutter-right {
  flex: 1;
}

.vscroll {
  width: 20px;
  flex: none;
  padding: 2px 1px 2px 0;
  background: #dadada;
  display: flex;
  flex-direction: column;
}

.v-btn {
  height: 19px;
  flex: none;
  display: flex;
  align-items: center;
  justify-content: center;
  background: #fff;
  border: 1px solid #777;
}

.v-btn .tri.up-tri {
  border-bottom-color: #777;
}

.v-thumb {
  height: 57px;
  margin-top: 237px;
  margin-bottom: auto;
  background: #fff;
  border: 1px solid #777;
}

/* status bar */
.status {
  height: 27px;
  flex: none;
  display: flex;
  align-items: center;
  border-top: 1px solid #c6c6c6;
  background: #f1f1f1;
  font-size: 12.500px;
  color: #444;
  white-space: nowrap;
}

.st-page { margin-left: 10px; width: 91px; font-size: 12.800px; }
.st-words { width: 86px; }
.st-book { margin-right: 22px; }
.st-lang { width: 98px; font-size: 12.200px; }
.st-a11y { margin-right: 4px; }

.st-right {
  margin-left: auto;
  display: flex;
  align-items: center;
  height: 26px;
  width: 356px;
}

.view-active {
  width: 50px;
  height: 26px;
  margin: 0 17px;
  display: flex;
  align-items: center;
  justify-content: center;
  background: #c6c6c6;
}

.zoom-track {
  position: relative;
  width: 122px;
  height: 1px;
  margin-left: 6px;
  background: #444;
}

.zoom-tick {
  position: absolute;
  left: 63px;
  top: -4px;
  width: 1px;
  height: 9px;
  background: #444;
}

.zoom-thumb {
  position: absolute;
  left: 69px;
  top: -7px;
  width: 6px;
  height: 14px;
  background: #666;
}

.zoom-pct {
  margin-left: 40px;
  font-size: 14px;
}

/* taskbar */
.taskbar {
  height: 50px;
  flex: none;
  display: flex;
  background: #2c3325;
  color: #fff;
}

.start {
  width: 60px;
  display: flex;
  align-items: center;
  padding-left: 20px;
}

.search {
  width: 429.500px;
  height: 49px;
  display: flex;
  align-items: center;
  padding-left: 15px;
  gap: 14px;
  background: #f2f2f2;
  color: #222;
  font-size: 17.700px;
}

.app {
  position: relative;
  width: 61.800px;
  flex: none;
  display: flex;
  align-items: center;
  justify-content: center;
}

.app.run::after {
  content: "";
  position: absolute;
  left: 5px;
  right: 5px;
  bottom: 0;
  height: 3px;
  background: #a9c6ef;
}

.active-app {
  background: #555b4c;
  box-shadow: inset -5px 0 0 #484e40;
}

.tray {
  margin-left: auto;
  width: 338px;
  flex: none;
  display: flex;
  align-items: center;
  font-size: 14px;
}

.lang, .clock {
  display: flex;
  flex-direction: column;
  align-items: center;
  gap: 3px;
  line-height: 21px;
}

.lang { width: 30px; }
.clock { width: 70px; }

.lang-fa {
  font-family: "DejaVu Sans", sans-serif;
  font-size: 13px;
}

.notif {
  position: relative;
  margin-bottom: 12px;
}

.notif-count {
  position: absolute;
  left: 8px;
  top: 14px;
  width: 20px;
  height: 20px;
  border: 1px solid #aaa;
  border-radius: 50%;
  background: #2c3325;
  text-align: center;
  font-weight: 700;
  line-height: 18px;
}

.show-desktop {
  width: 1px;
  height: 50px;
  margin-left: 27px;
  background: #5a5f50;
}

/* floating badge on top of the zoom control */
.float-badge {
  position: absolute;
  left: 1841px;
  top: 1003px;
  width: 50px;
  height: 50px;
  background: #1c2145;
  border-radius: 50% 50% 50% 6px;
  display: flex;
  align-items: center;
  justify-content: center;
}

.float-ring {
  width: 38px;
  height: 38px;
  border: 3px solid #f0405f;
  border-radius: 50%;
  background: #f0f0fa;
  color: #1c2145;
  font-size: 21px;
  font-weight: 700;
  line-height: 32px;
  text-align: center;
}

.float-grip {
  position: absolute;
  left: 2px;
  bottom: 2px;
}
```
